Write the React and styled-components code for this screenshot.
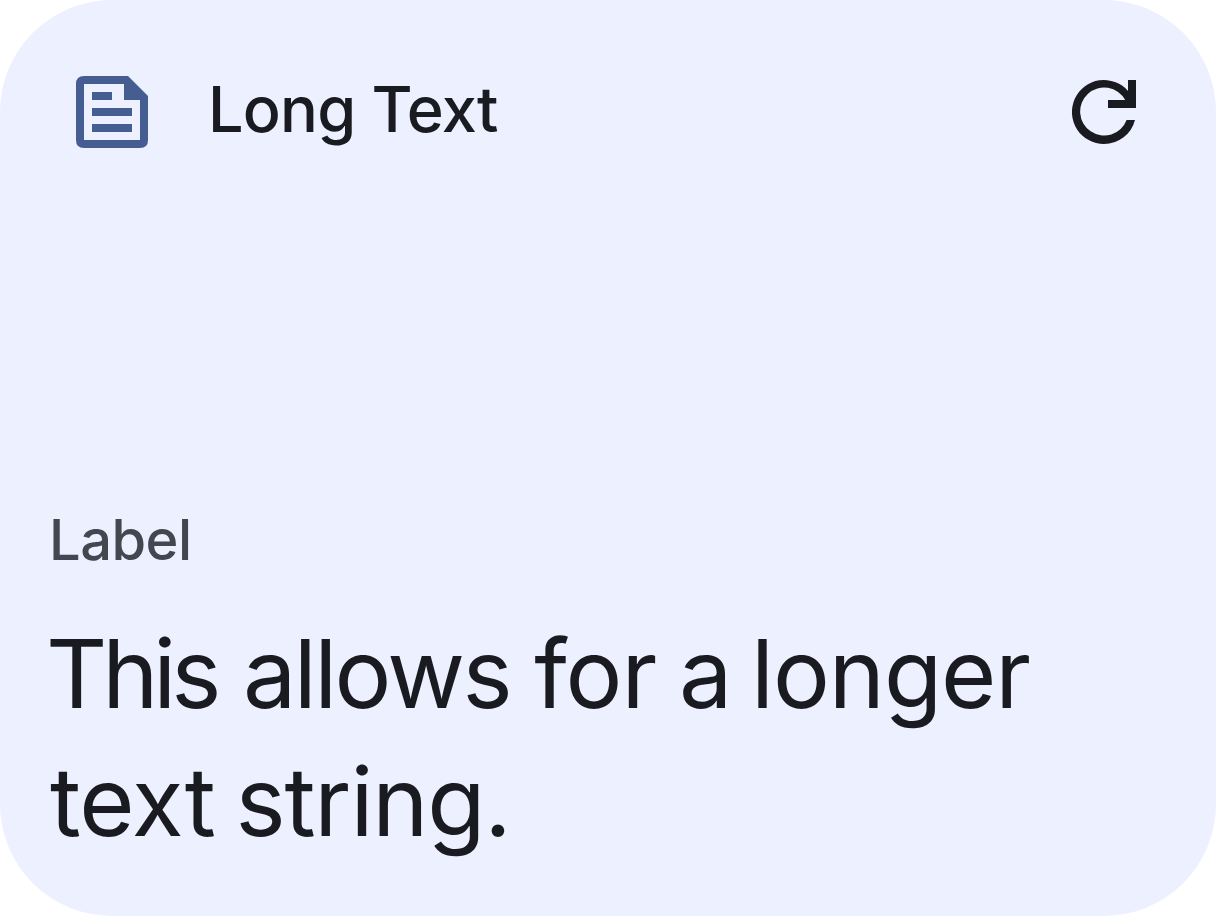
import React from "react";
import styled, { createGlobalStyle } from "styled-components";

const GlobalStyle = createGlobalStyle`
  * { box-sizing: border-box; }
  body { margin: 0; background: #ffffff; }
`;

const Card = styled.main`
  width: 1216px;
  height: 916px;
  display: flex;
  flex-direction: column;
  justify-content: space-between;
  border-radius: 112px;
  background: #ecf0ff;
  color: #1a1b20;
  font-family: Inter, sans-serif;
  overflow: hidden;
`;

const Header = styled.header`
  display: flex;
  align-items: center;
  height: 224px;
  padding: 0 64px;
`;

const Icon = styled.svg`
  width: 96px;
  height: 96px;
  flex: none;
  fill: ${(p) => p.$color};
`;

const Title = styled.h1`
  margin: 0 auto 6px 48px;
  font-size: 63px;
  font-weight: 520;
  line-height: 80px;
  letter-spacing: -0.8px;
  white-space: nowrap;
`;

const Content = styled.section`
  padding: 0 46px 50px;
`;

const Label = styled.div`
  margin-bottom: 30px;
  padding-left: 3px;
  color: #44474f;
  font-size: 56px;
  font-weight: 500;
  line-height: 80px;
  letter-spacing: -0.5px;
`;

const Message = styled.p`
  margin: 0;
  font-size: 95px;
  line-height: 128px;
  letter-spacing: -2.5px;
  white-space: nowrap;
`;

const Line = styled.span`
  display: block;
  padding-left: ${(p) => p.$indent || 0}px;
`;

const Word = styled.span`
  letter-spacing: ${(p) => p.$tracking}px;
  margin-right: ${(p) => p.$after || 0}px;
`;

export default function App() {
  return (
    <>
      <GlobalStyle />
      <Card>
        <Header>
          <Icon viewBox="0 0 96 96" $color="#455e91">
            <path fillRule="evenodd" d="M20 12H64L84 32V76Q84 84 76 84H20Q12 84 12 76V20Q12 12 20 12ZM20 20V76H76V36H60V20ZM28 28H48V36H28ZM28 44H68V52H28ZM28 60H68V68H28Z" />
          </Icon>
          <Title>Long Text</Title>
          <Icon viewBox="0 0 96 96" $color="#1a1b20">
            <path d="M48 80A32 32 0 1 1 72 26.9V16H80V44H52V36H69.2A24 24 0 1 0 70.6 56H79A32 32 0 0 1 48 80Z" />
          </Icon>
        </Header>
        <Content>
          <Label>Label</Label>
          <Message>
            <Line>
              <Word $tracking={-5.1} $after={2.6}>This</Word>{" "}
              <Word $tracking={-2.6}>allows</Word>{" "}
              <Word $tracking={-1} $after={-1.5}>for</Word>{" "}
              <Word $tracking={-2.5} $after={-3}>a</Word>{" "}
              <Word $tracking={-1.1}>longer</Word>
            </Line>
            <Line $indent={4}>
              <Word $tracking={-0.8} $after={-3.7}>text</Word>{" "}
              <Word $tracking={-1.2}>string.</Word>
            </Line>
          </Message>
        </Content>
      </Card>
    </>
  );
}
